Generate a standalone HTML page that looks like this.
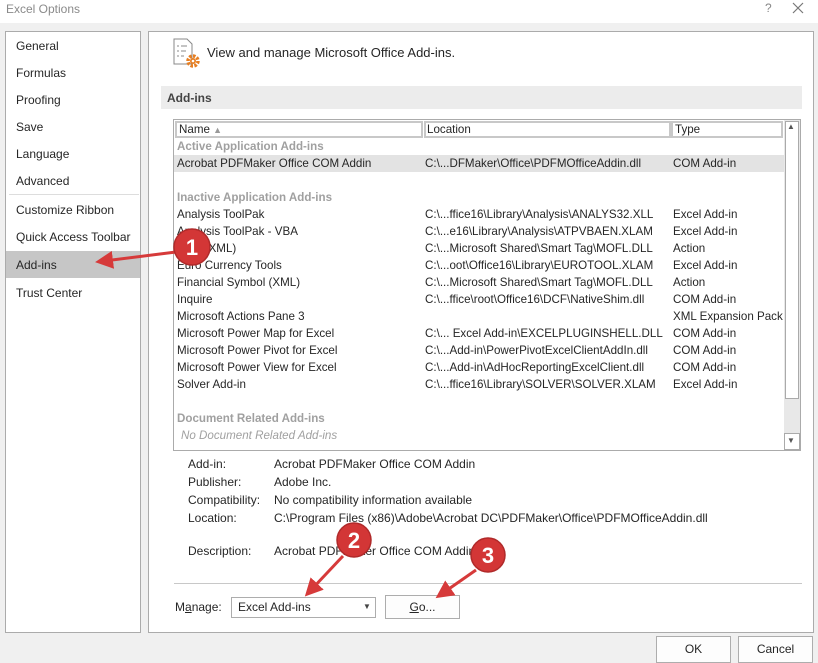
<!DOCTYPE html>
<html><head><meta charset="utf-8"><style>
*{margin:0;padding:0;box-sizing:border-box}
body{width:818px;height:663px;background:#f0f0f0;font-family:"Liberation Sans",sans-serif;font-size:12px;color:#262626;position:relative;overflow:hidden}
.a{position:absolute;white-space:nowrap}
.title{left:0;top:0;width:818px;height:23px;background:#fff}
.left{left:5px;top:31px;width:136px;height:602px;background:#fff;border:1px solid #ababab}
.left div{position:absolute;left:10px;font-size:12px}
.right{left:148px;top:31px;width:666px;height:602px;background:#fff;border:1px solid #ababab}
.lb{left:173px;top:119px;width:628px;height:332px;border:1px solid #ababab;background:#fff}
.r{font-size:11.6px}
.g{color:#a0a0a0;font-weight:bold}
.btn{background:#fdfdfd;border:1px solid #adadad;text-align:center}
</style></head><body>
<div class="a title"></div>
<div class="a" style="left:6px;top:2px;color:#8a8a8a;font-size:12px">Excel Options</div>
<div class="a" style="left:765px;top:1px;color:#888;font-size:12px">?</div>
<svg class="a" style="left:792px;top:2px" width="12" height="12"><path d="M1 1L11 11M11 1L1 11" stroke="#777" stroke-width="1.2"/></svg>

<div class="a left">
<div style="top:7px">General</div>
<div style="top:34px">Formulas</div>
<div style="top:61px">Proofing</div>
<div style="top:88px">Save</div>
<div style="top:115px">Language</div>
<div style="top:142px">Advanced</div>
<div style="top:162px;left:3px;width:130px;height:1px;background:#ddd"></div>
<div style="top:171px">Customize Ribbon</div>
<div style="top:198px">Quick Access Toolbar</div>
<div style="top:219px;left:0;width:134px;height:27px;background:#c6c6c6"></div>
<div style="top:226px">Add-ins</div>
<div style="top:254px">Trust Center</div>
</div>

<div class="a right"></div>
<svg class="a" style="left:172px;top:37px" width="30" height="32"><path d="M2 2h13l5 5v20H2z" fill="#fff" stroke="#888"/><path d="M5 9h2M9 9h6M5 14h2M9 14h5M5 19h2M9 19h3" stroke="#888"/><circle cx="21" cy="24" r="5" fill="none" stroke="#e67e22" stroke-width="3.5" stroke-dasharray="2.5 1.4"/><circle cx="21" cy="24" r="3" fill="#e67e22"/><circle cx="21" cy="24" r="1.3" fill="#fff"/></svg>
<div class="a" style="left:207px;top:45px;font-size:13px">View and manage Microsoft Office Add-ins.</div>
<div class="a" style="left:161px;top:86px;width:641px;height:23px;background:#ececec"></div>
<div class="a" style="left:167px;top:91px;font-weight:bold;color:#444">Add-ins</div>

<div class="a lb"></div>
<div class="a" style="left:175px;top:121px;width:248px;height:17px;border:2px solid #c8c8c8"></div>
<div class="a" style="left:424px;top:121px;width:247px;height:17px;border:2px solid #c8c8c8"></div>
<div class="a" style="left:671px;top:121px;width:112px;height:17px;border:2px solid #c8c8c8"></div>
<div class="a r" style="left:179px;top:123px">Name <span style="color:#999;font-size:9px">▲</span></div>
<div class="a r" style="left:427px;top:123px">Location</div>
<div class="a r" style="left:675px;top:123px">Type</div>
<div class="a" style="left:784px;top:120px;width:16px;height:330px;background:#e8e8e8"></div>
<div class="a" style="left:785px;top:121px;width:14px;height:278px;background:#fff;border:1px solid #aaa"></div>
<div class="a" style="left:787px;top:122px;font-size:8px;color:#555">▲</div>
<div class="a" style="left:784px;top:433px;width:16px;height:17px;background:#fff;border:1px solid #aaa"></div>
<div class="a" style="left:787px;top:436px;font-size:8px;color:#555">▼</div>
<div class="a" style="left:174px;top:155px;width:610px;height:17px;background:#e3e3e3"></div>

<div class="a g r" style="left:177px;top:140px">Active Application Add-ins</div>
<div class="a r" style="left:177px;top:157px">Acrobat PDFMaker Office COM Addin</div><div class="a r" style="left:425px;top:157px">C:\...DFMaker\Office\PDFMOfficeAddin.dll</div><div class="a r" style="left:673px;top:157px">COM Add-in</div>
<div class="a g r" style="left:177px;top:191px">Inactive Application Add-ins</div>
<div class="a r" style="left:177px;top:208px">Analysis ToolPak</div><div class="a r" style="left:425px;top:208px">C:\...ffice16\Library\Analysis\ANALYS32.XLL</div><div class="a r" style="left:673px;top:208px">Excel Add-in</div>
<div class="a r" style="left:177px;top:225px">Analysis ToolPak - VBA</div><div class="a r" style="left:425px;top:225px">C:\...e16\Library\Analysis\ATPVBAEN.XLAM</div><div class="a r" style="left:673px;top:225px">Excel Add-in</div>
<div class="a r" style="left:177px;top:242px">Date (XML)</div><div class="a r" style="left:425px;top:242px">C:\...Microsoft Shared\Smart Tag\MOFL.DLL</div><div class="a r" style="left:673px;top:242px">Action</div>
<div class="a r" style="left:177px;top:259px">Euro Currency Tools</div><div class="a r" style="left:425px;top:259px">C:\...oot\Office16\Library\EUROTOOL.XLAM</div><div class="a r" style="left:673px;top:259px">Excel Add-in</div>
<div class="a r" style="left:177px;top:276px">Financial Symbol (XML)</div><div class="a r" style="left:425px;top:276px">C:\...Microsoft Shared\Smart Tag\MOFL.DLL</div><div class="a r" style="left:673px;top:276px">Action</div>
<div class="a r" style="left:177px;top:293px">Inquire</div><div class="a r" style="left:425px;top:293px">C:\...ffice\root\Office16\DCF\NativeShim.dll</div><div class="a r" style="left:673px;top:293px">COM Add-in</div>
<div class="a r" style="left:177px;top:310px">Microsoft Actions Pane 3</div><div class="a r" style="left:673px;top:310px">XML Expansion Pack</div>
<div class="a r" style="left:177px;top:327px">Microsoft Power Map for Excel</div><div class="a r" style="left:425px;top:327px">C:\... Excel Add-in\EXCELPLUGINSHELL.DLL</div><div class="a r" style="left:673px;top:327px">COM Add-in</div>
<div class="a r" style="left:177px;top:344px">Microsoft Power Pivot for Excel</div><div class="a r" style="left:425px;top:344px">C:\...Add-in\PowerPivotExcelClientAddIn.dll</div><div class="a r" style="left:673px;top:344px">COM Add-in</div>
<div class="a r" style="left:177px;top:361px">Microsoft Power View for Excel</div><div class="a r" style="left:425px;top:361px">C:\...Add-in\AdHocReportingExcelClient.dll</div><div class="a r" style="left:673px;top:361px">COM Add-in</div>
<div class="a r" style="left:177px;top:378px">Solver Add-in</div><div class="a r" style="left:425px;top:378px">C:\...ffice16\Library\SOLVER\SOLVER.XLAM</div><div class="a r" style="left:673px;top:378px">Excel Add-in</div>
<div class="a g r" style="left:177px;top:412px">Document Related Add-ins</div>
<div class="a r" style="left:181px;top:429px;color:#a0a0a0;font-style:italic">No Document Related Add-ins</div>

<div class="a" style="left:188px;top:457px">Add-in:</div><div class="a" style="left:274px;top:457px">Acrobat PDFMaker Office COM Addin</div>
<div class="a" style="left:188px;top:475px">Publisher:</div><div class="a" style="left:274px;top:475px">Adobe Inc.</div>
<div class="a" style="left:188px;top:493px">Compatibility:</div><div class="a" style="left:274px;top:493px">No compatibility information available</div>
<div class="a" style="left:188px;top:511px">Location:</div><div class="a" style="left:274px;top:511px">C:\Program Files (x86)\Adobe\Acrobat DC\PDFMaker\Office\PDFMOfficeAddin.dll</div>
<div class="a" style="left:188px;top:544px">Description:</div><div class="a" style="left:274px;top:544px">Acrobat PDFMaker Office COM Addin</div>
<div class="a" style="left:174px;top:583px;width:628px;height:1px;background:#c8c8c8"></div>
<div class="a" style="left:175px;top:600px">M<u>a</u>nage:</div>
<div class="a" style="left:231px;top:597px;width:145px;height:21px;border:1px solid #adadad;background:#fff"></div>
<div class="a" style="left:238px;top:600px">Excel Add-ins</div>
<div class="a" style="left:363px;top:602px;font-size:8px;color:#444">▼</div>
<div class="a btn" style="left:385px;top:595px;width:75px;height:24px;line-height:22px"><u>G</u>o...</div>
<div class="a btn" style="left:656px;top:636px;width:75px;height:27px;line-height:25px">OK</div>
<div class="a btn" style="left:738px;top:636px;width:75px;height:27px;line-height:25px">Cancel</div>

<svg class="a" style="left:0;top:0" width="818" height="663">
<defs><marker id="m" markerWidth="6" markerHeight="6" refX="3" refY="3" orient="auto"><path d="M0 0L6 3L0 6z" fill="#d63a3a"/></marker></defs>
<g stroke="#d63a3a" stroke-width="3" fill="none" marker-end="url(#m)">
<path d="M176 252L104 261"/><path d="M343 556L311 590"/><path d="M476 570L443 593"/></g>
<g fill="#d33636" stroke="#b02a2a" stroke-width="1.5"><circle cx="192" cy="247" r="18"/><circle cx="354" cy="540" r="17"/><circle cx="488" cy="555" r="17"/></g>
<g fill="#fff" font-family="Liberation Sans" font-weight="bold" font-size="22" text-anchor="middle">
<text x="192" y="255">1</text><text x="354" y="548">2</text><text x="488" y="563">3</text></g>
</svg>
</body></html>
